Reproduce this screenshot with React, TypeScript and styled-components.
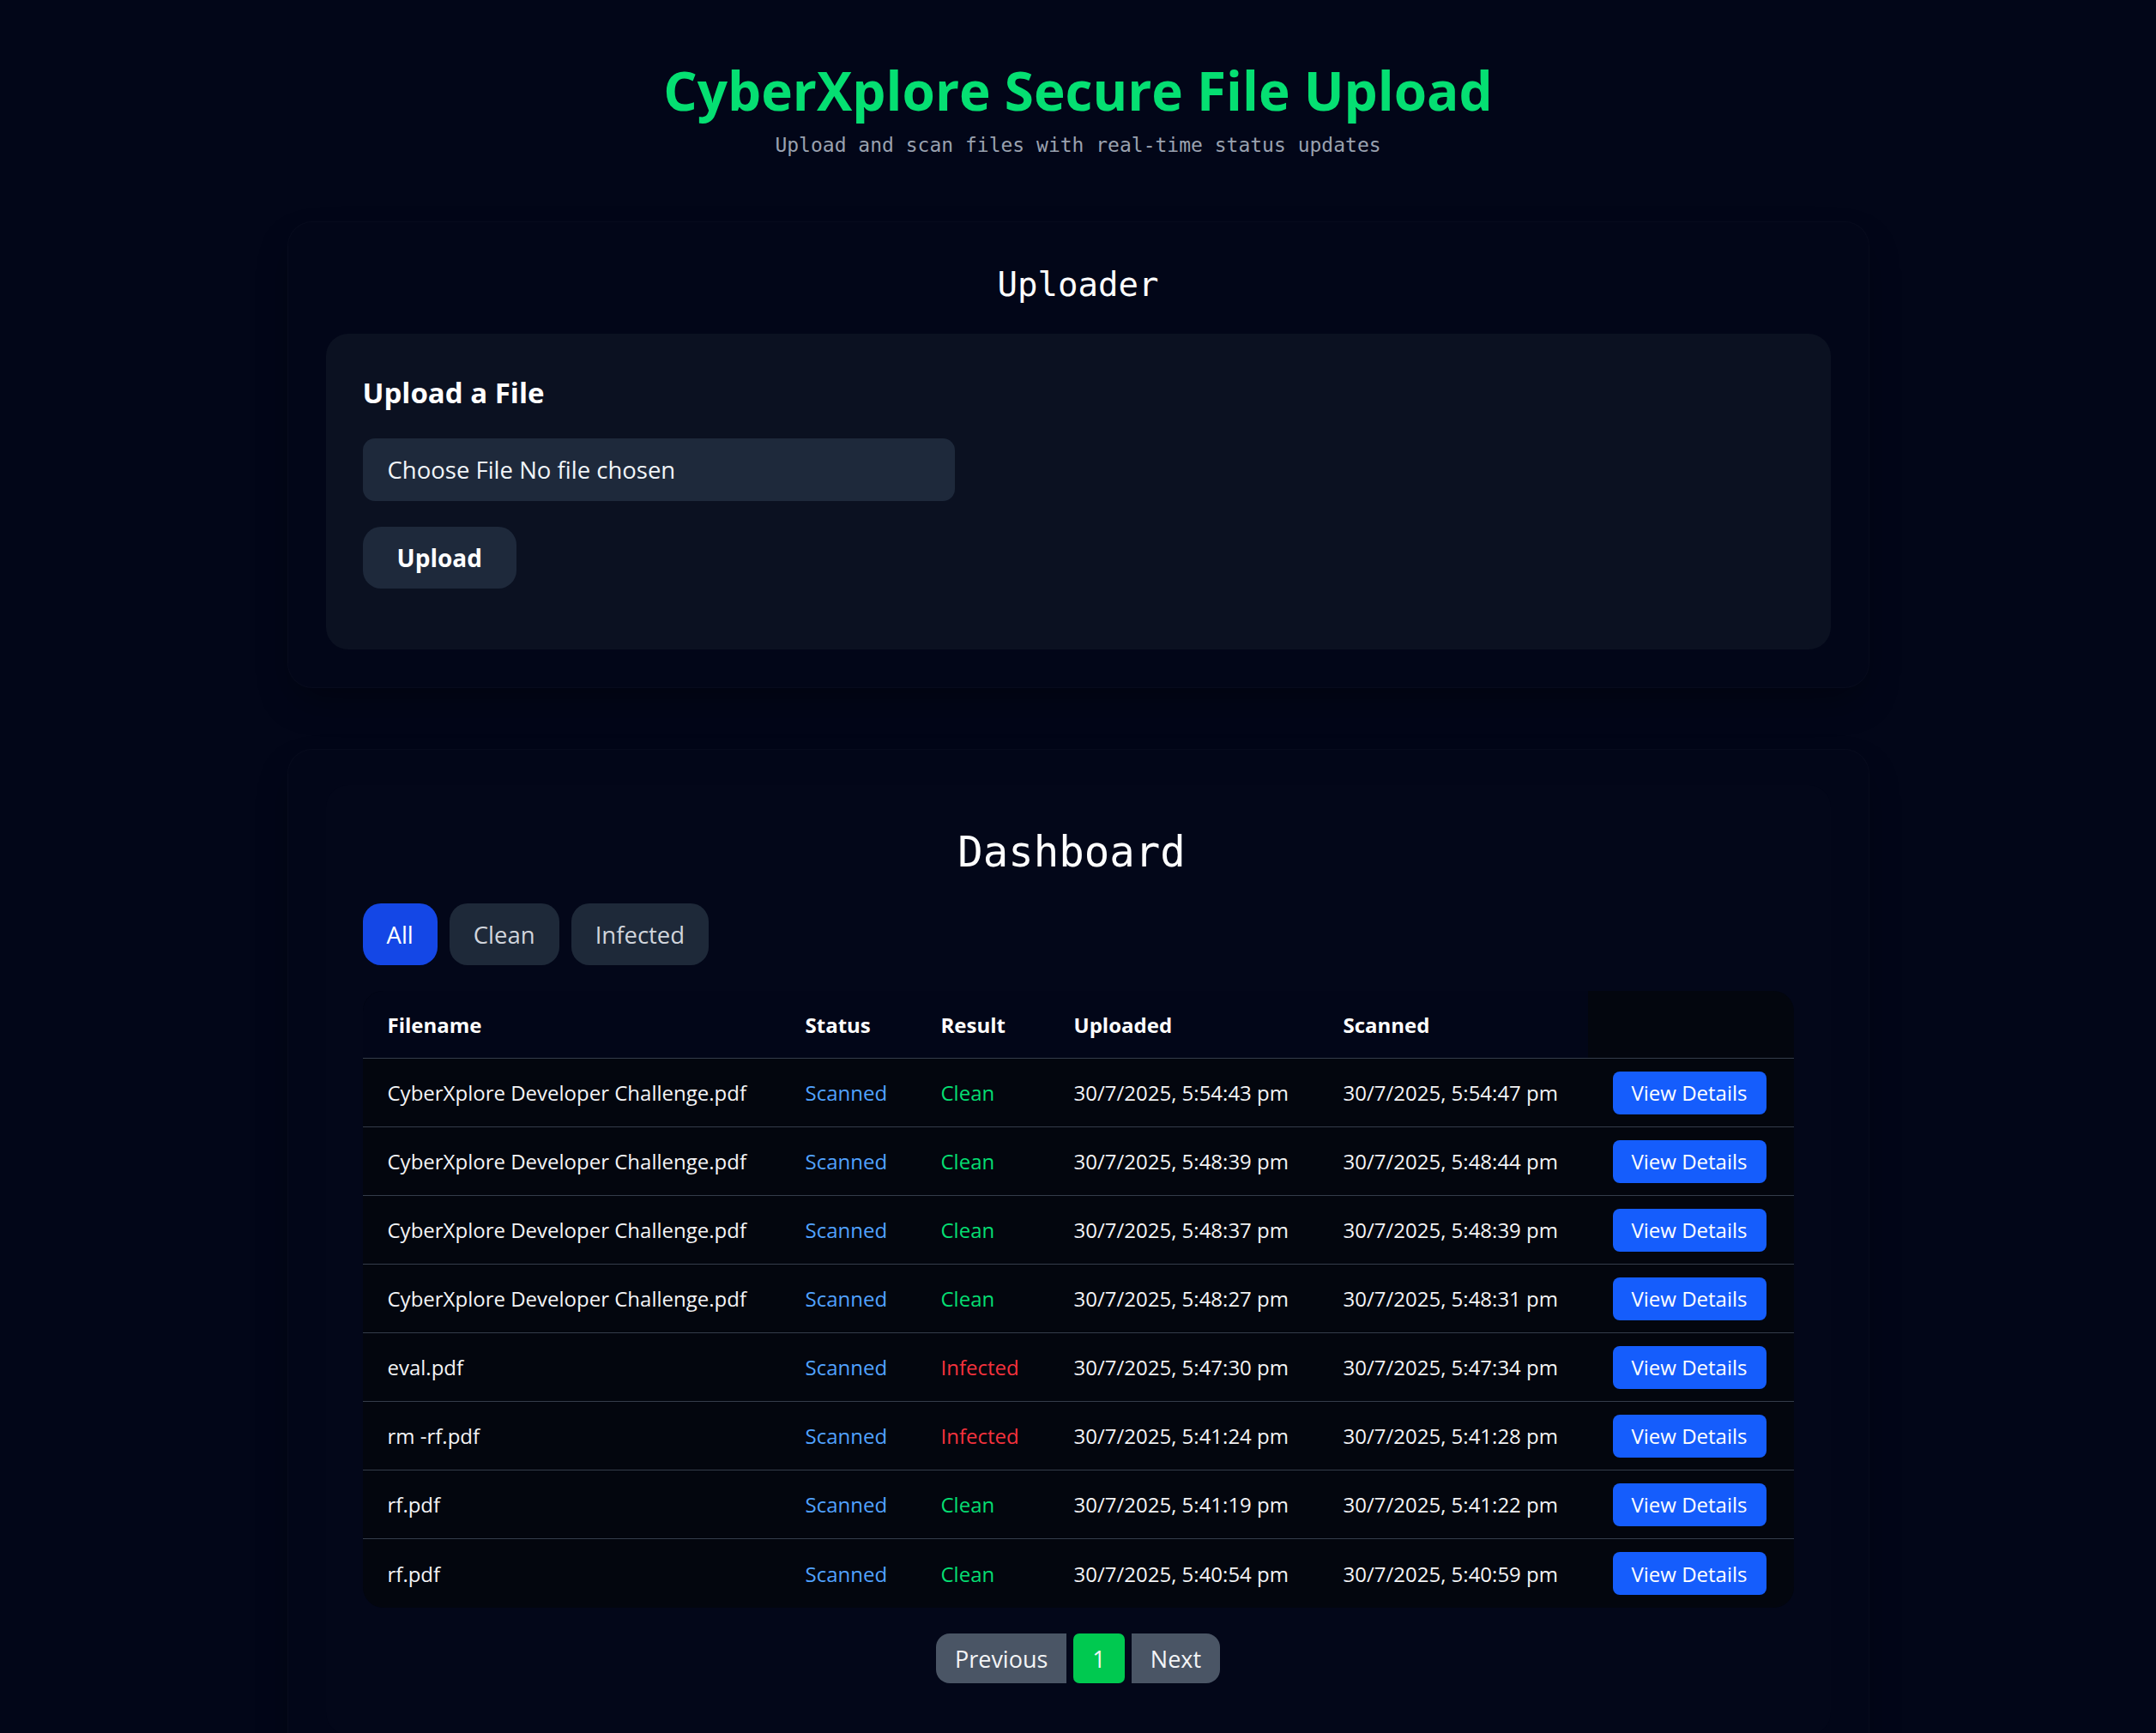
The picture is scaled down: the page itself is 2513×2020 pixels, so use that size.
import React from "react";
import styled, { createGlobalStyle } from "styled-components";

const GlobalStyle = createGlobalStyle`
  html, body {
    margin: 0;
    padding: 0;
    background: #020618;
  }
  body {
    font-family: "Open Sans", "Noto Sans", sans-serif;
    color: #ffffff;
  }
  * { box-sizing: border-box; }
`;

const Page = styled.div`
  min-height: 100vh;
  background: #020618;
  padding: 69px 0 120px;
`;

const Header = styled.header`
  text-align: center;
  margin-bottom: 71px;
`;

const Title = styled.h1`
  margin: 0;
  font-weight: 700;
  font-size: 62px;
  line-height: 72px;
  color: #05df72;
`;

const Subtitle = styled.p`
  margin: 10px 0 0;
  font-family: "DejaVu Sans Mono", monospace;
  font-size: 23px;
  line-height: 36px;
  color: #99a1af;
`;

const Section = styled.section`
  width: 1844px;
  margin: 0 auto 71px;
  padding: 44px;
  background: #020618;
  border: 1px solid rgba(255, 255, 255, 0.022);
  border-radius: 29px;
  box-shadow: 0 20px 45px -12px rgba(0, 0, 0, 0.4);
`;

const MonoHeading = styled.h2<{ $size: number; $lh: number; $gap: number; $shift?: number }>`
  margin: 0 0 ${(p) => p.$gap}px;
  padding-right: ${(p) => p.$shift ?? 0}px;
  text-align: center;
  font-family: "DejaVu Sans Mono", monospace;
  font-weight: 400;
  font-size: ${(p) => p.$size}px;
  line-height: ${(p) => p.$lh}px;
  color: #ffffff;
`;

const UploadCard = styled.div`
  background: #0b1121;
  border-radius: 26px;
  padding: 44px 43px 71px;
`;

const CardTitle = styled.h3`
  margin: 0 0 28px;
  font-size: 33px;
  line-height: 50px;
  font-weight: 700;
  color: #ffffff;
`;

const FileField = styled.label`
  display: flex;
  align-items: center;
  width: 690px;
  height: 73px;
  padding: 0 29px;
  margin-bottom: 30px;
  background: #1e293b;
  border-radius: 14px;
  font-size: 27.5px;
  color: #f1f5f9;
  cursor: pointer;
`;

const HiddenInput = styled.input`
  display: none;
`;

const UploadButton = styled.button`
  display: block;
  height: 72px;
  padding: 0 40px;
  border: none;
  border-radius: 21px;
  background: #1e293b;
  color: #ffffff;
  font-family: inherit;
  font-size: 28px;
  font-weight: 700;
  cursor: pointer;
`;

const DashboardSection = styled(Section)`
  padding-top: 41px;
`;

const DashboardCard = styled.div`
  background: #030719;
  border-radius: 26px;
  padding: 46px 43px 60px;
`;

const Filters = styled.div`
  display: flex;
  gap: 14px;
  margin-bottom: 30px;
`;

const FilterButton = styled.button<{ $active?: boolean }>`
  height: 72px;
  padding: 0 28px;
  border: none;
  border-radius: 21px;
  background: ${(p) => (p.$active ? "#1447e6" : "#1e2939")};
  color: ${(p) => (p.$active ? "#ffffff" : "#d1d5dc")};
  font-family: inherit;
  font-size: 27.5px;
  cursor: pointer;
`;

const Table = styled.div`
  background: #03060e;
  border-radius: 24px;
  overflow: hidden;
`;

const Row = styled.div<{ $head?: boolean }>`
  display: grid;
  grid-template-columns: 487px 158px 155px 314px 314px 1fr;
  height: ${(p) => (p.$head ? 79 : 80)}px;
  border-bottom: 1px solid #343c4a;
  &:last-child {
    border-bottom: none;
  }
`;

const HeadCell = styled.div<{ $filled?: boolean }>`
  display: flex;
  align-items: center;
  padding: 0 29px;
  background: ${(p) => (p.$filled ? "#020618" : "transparent")};
  font-size: 24px;
  font-weight: 700;
  color: #ffffff;
`;

const Cell = styled.div<{ $tone?: "scanned" | "clean" | "infected" }>`
  display: flex;
  align-items: center;
  padding: 0 29px;
  font-size: 24px;
  white-space: nowrap;
  color: ${(p) =>
    p.$tone === "scanned"
      ? "#51a2ff"
      : p.$tone === "clean"
      ? "#05df72"
      : p.$tone === "infected"
      ? "#f5323d"
      : "#f3f4f6"};
`;

const DetailsButton = styled.button`
  height: 50px;
  padding: 0 22px;
  border: none;
  border-radius: 8px;
  background: #155dfc;
  color: #ffffff;
  font-family: inherit;
  font-size: 24px;
  cursor: pointer;
`;

const Pagination = styled.nav`
  display: flex;
  justify-content: center;
  gap: 8px;
  margin-top: 30px;
`;

const PageButton = styled.button<{ $variant: "prev" | "next" | "current" }>`
  height: 58px;
  padding: 0 22px;
  border: none;
  font-family: inherit;
  font-size: 27px;
  color: #f3f4f6;
  background: ${(p) => (p.$variant === "current" ? "#00c950" : "#4a5565")};
  border-radius: ${(p) =>
    p.$variant === "prev"
      ? "16px 0 0 16px"
      : p.$variant === "next"
      ? "0 16px 16px 0"
      : "7px"};
  cursor: pointer;
`;

type Result = "Clean" | "Infected";
interface FileRow {
  name: string;
  result: Result;
  uploaded: string;
  scanned: string;
}

const rows: FileRow[] = [
  { name: "CyberXplore Developer Challenge.pdf", result: "Clean", uploaded: "30/7/2025, 5:54:43 pm", scanned: "30/7/2025, 5:54:47 pm" },
  { name: "CyberXplore Developer Challenge.pdf", result: "Clean", uploaded: "30/7/2025, 5:48:39 pm", scanned: "30/7/2025, 5:48:44 pm" },
  { name: "CyberXplore Developer Challenge.pdf", result: "Clean", uploaded: "30/7/2025, 5:48:37 pm", scanned: "30/7/2025, 5:48:39 pm" },
  { name: "CyberXplore Developer Challenge.pdf", result: "Clean", uploaded: "30/7/2025, 5:48:27 pm", scanned: "30/7/2025, 5:48:31 pm" },
  { name: "eval.pdf", result: "Infected", uploaded: "30/7/2025, 5:47:30 pm", scanned: "30/7/2025, 5:47:34 pm" },
  { name: "rm -rf.pdf", result: "Infected", uploaded: "30/7/2025, 5:41:24 pm", scanned: "30/7/2025, 5:41:28 pm" },
  { name: "rf.pdf", result: "Clean", uploaded: "30/7/2025, 5:41:19 pm", scanned: "30/7/2025, 5:41:22 pm" },
  { name: "rf.pdf", result: "Clean", uploaded: "30/7/2025, 5:40:54 pm", scanned: "30/7/2025, 5:40:59 pm" },
];

export default function App() {
  return (
    <>
      <GlobalStyle />
      <Page>
        <Header>
          <Title>CyberXplore Secure File Upload</Title>
          <Subtitle>Upload and scan files with real-time status updates</Subtitle>
        </Header>

        <Section>
          <MonoHeading $size={39} $lh={58} $gap={28}>
            Uploader
          </MonoHeading>
          <UploadCard>
            <CardTitle>Upload a File</CardTitle>
            <FileField>
              <HiddenInput type="file" />
              Choose File No file chosen
            </FileField>
            <UploadButton>Upload</UploadButton>
          </UploadCard>
        </Section>

        <DashboardSection>
          <DashboardCard>
            <MonoHeading $size={49} $lh={65} $gap={27} $shift={15}>
              Dashboard
            </MonoHeading>
            <Filters>
              <FilterButton $active>All</FilterButton>
              <FilterButton>Clean</FilterButton>
              <FilterButton>Infected</FilterButton>
            </Filters>
            <Table>
              <Row $head>
                <HeadCell $filled>Filename</HeadCell>
                <HeadCell $filled>Status</HeadCell>
                <HeadCell $filled>Result</HeadCell>
                <HeadCell $filled>Uploaded</HeadCell>
                <HeadCell $filled>Scanned</HeadCell>
                <HeadCell />
              </Row>
              {rows.map((r, i) => (
                <Row key={i}>
                  <Cell>{r.name}</Cell>
                  <Cell $tone="scanned">Scanned</Cell>
                  <Cell $tone={r.result === "Clean" ? "clean" : "infected"}>{r.result}</Cell>
                  <Cell>{r.uploaded}</Cell>
                  <Cell>{r.scanned}</Cell>
                  <Cell>
                    <DetailsButton>View Details</DetailsButton>
                  </Cell>
                </Row>
              ))}
            </Table>
            <Pagination>
              <PageButton $variant="prev">Previous</PageButton>
              <PageButton $variant="current">1</PageButton>
              <PageButton $variant="next">Next</PageButton>
            </Pagination>
          </DashboardCard>
        </DashboardSection>
      </Page>
    </>
  );
}
